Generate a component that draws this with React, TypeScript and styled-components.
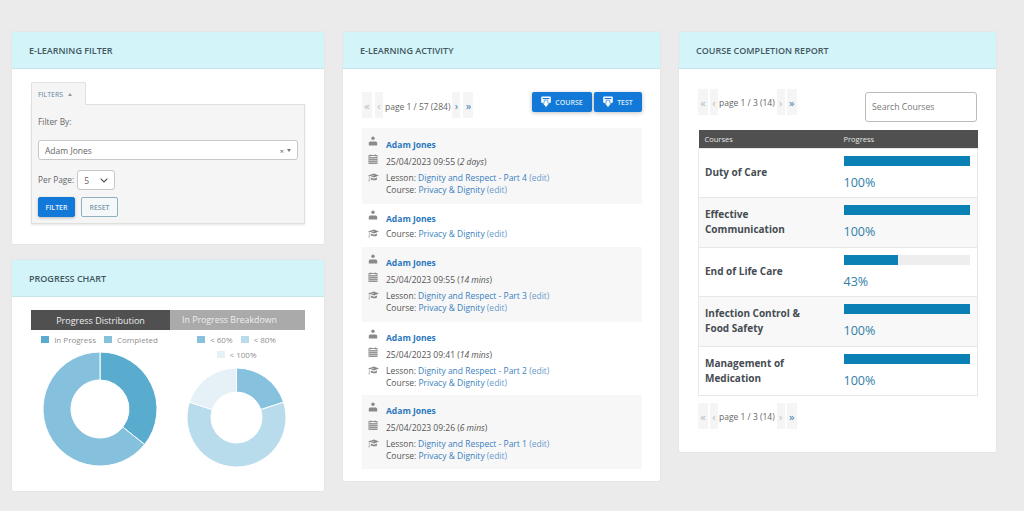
import React from "react";
import styled, { createGlobalStyle } from "styled-components";

const Global = createGlobalStyle`
  html, body { margin: 0; padding: 0; background: #ebebeb; }
  body { font-family: "Open Sans", "Noto Sans", sans-serif; color: #555; overflow: hidden; }
  * { box-sizing: border-box; }
`;

const Page = styled.div`
  width: 1024px;
  height: 511px;
  padding: 32px 28px 0 12px;
  display: grid;
  grid-template-columns: 312px 317px 317px;
  column-gap: 19px;
  align-items: start;
`;
const Column = styled.div`
  display: flex;
  flex-direction: column;
  gap: 16px;
`;
const Card = styled.section<{ $h: number }>`
  background: #fff;
  height: ${(p) => p.$h}px;
  border-radius: 2px;
  box-shadow: 0 0 0 1px #e6e6e6;
`;
const CardHead = styled.h2`
  margin: 0;
  height: 37px;
  padding: 0 17px;
  display: flex;
  align-items: center;
  background: #d3f5fa;
  border-bottom: 1px solid #c4e3ea;
  font-size: 9px;
  font-weight: 600;
  color: #44565f;
`;
const FilterBody = styled.div`
  padding: 13px 19px 0;
`;
const Tab = styled.div`
  width: 55px;
  height: 23px;
  margin-bottom: -1px;
  position: relative;
  z-index: 1;
  display: flex;
  align-items: center;
  gap: 5px;
  padding-left: 6px;
  background: #f5f5f5;
  border: 1px solid #e0e0e0;
  border-bottom: none;
  border-radius: 2px 2px 0 0;
  font-size: 7px;
  color: #5f86a0;
`;
const Caret = styled.span<{ $up?: boolean }>`
  width: 0;
  height: 0;
  border-left: 2.5px solid transparent;
  border-right: 2.5px solid transparent;
  ${(p) => (p.$up ? "border-bottom: 3px solid #999;" : "border-top: 3px solid #777;")}
`;
const FilterPanel = styled.div`
  height: 120px;
  padding: 10px 6px 0;
  background: #f5f5f5;
  border: 1px solid #e0e0e0;
  box-shadow: 0 1px 2px rgba(0, 0, 0, 0.1);
`;
const FieldLabel = styled.div`
  font-size: 8.3px;
  line-height: 14px;
  color: #666;
`;
const Combo = styled.div`
  margin-top: 11px;
  height: 20px;
  display: flex;
  align-items: center;
  justify-content: space-between;
  padding: 0 6px;
  background: #fff;
  border: 1px solid #c8c8c8;
  border-radius: 3px;
  font-size: 8.5px;
  color: #666;
`;
const ComboControls = styled.span`
  display: flex;
  align-items: center;
  gap: 3px;
  font-size: 8px;
`;
const PerPageRow = styled.div`
  margin-top: 10px;
  display: flex;
  align-items: center;
  gap: 3px;
`;
const PerPage = styled.div`
  width: 38px;
  height: 20px;
  display: flex;
  align-items: center;
  justify-content: space-between;
  padding: 0 6px;
  background: #fff;
  border: 1px solid #c8c8c8;
  border-radius: 3px;
  font-size: 8.5px;
  color: #666;
`;
const ButtonRow = styled.div`
  margin-top: 7px;
  display: flex;
  gap: 6px;
`;
const Btn = styled.button<{ $ghost?: boolean }>`
  width: 37px;
  height: 20px;
  padding: 0;
  font-family: inherit;
  font-size: 7px;
  font-weight: 600;
  border-radius: 2px;
  color: ${(p) => (p.$ghost ? "#7a9aaa" : "#e8f2fb")};
  background: ${(p) => (p.$ghost ? "#f5f8f9" : "#1279d8")};
  border: 1px solid ${(p) => (p.$ghost ? "#8fb0bf" : "#1279d8")};
  box-shadow: ${(p) => (p.$ghost ? "none" : "0 1px 3px rgba(0,0,0,.25)")};
`;
const ChartBody = styled.div`
  padding: 13px 19px 0;
`;
const Steps = styled.div`
  height: 20px;
  display: grid;
  grid-template-columns: 139px 135px;
  background: #aaa;
`;
const Step = styled.div<{ $dark?: boolean }>`
  position: relative;
  display: flex;
  align-items: center;
  justify-content: center;
  font-size: ${(p) => (p.$dark ? "9px" : "8.8px")};
  color: #eee;
  padding-right: ${(p) => (p.$dark ? "0" : "16px")};
  background: ${(p) => (p.$dark ? "#505050" : "#aaa")};
`;
const Arrow = styled.span`
  position: absolute;
  right: -9px;
  top: 0;
  width: 0;
  height: 0;
  border-top: 10px solid transparent;
  border-bottom: 10px solid transparent;
  border-left: 9px solid #505050;
`;
const Charts = styled.div`
  display: grid;
  grid-template-columns: 137px 137px;
`;
const ChartCol = styled.div`
  display: flex;
  flex-direction: column;
  align-items: center;
`;
const Legend = styled.div<{ $w: number }>`
  width: ${(p) => p.$w}px;
  display: flex;
  flex-wrap: wrap;
  justify-content: center;
  column-gap: 8px;
  padding-top: 2.5px;
`;
const LegendItem = styled.span`
  display: inline-flex;
  align-items: center;
  gap: 5px;
  height: 14.5px;
  font-size: 8px;
  color: #8f8f8f;
`;
const Swatch = styled.i<{ $c: string }>`
  display: block;
  width: 8px;
  height: 7px;
  background: ${(p) => p.$c};
`;
const DonutSvg = styled.svg<{ $mt: number }>`
  display: block;
  margin-top: ${(p) => p.$mt}px;
`;
const ActivityBody = styled.div`
  padding: 23px 18px 0 19px;
`;
const ActivityTop = styled.div`
  height: 36px;
  display: flex;
  align-items: flex-start;
  justify-content: space-between;
`;
const Pager = styled.div<{ $mt?: number }>`
  display: flex;
  align-items: center;
  height: 26px;
  margin-top: ${(p) => p.$mt ?? 0}px;
  font-size: 8.5px;
  color: #666;
`;
const PageBtn = styled.span<{ $w?: number; $off?: boolean; $gap?: number }>`
  height: 26px;
  width: ${(p) => p.$w ?? 10}px;
  margin-right: ${(p) => p.$gap ?? 3}px;
  display: flex;
  align-items: center;
  justify-content: center;
  background: #f5f5f5;
  color: ${(p) => (p.$off ? "#bbb" : "#3b7fb5")};
  font-size: 11px;
`;
const PageText = styled.span<{ $drop?: number }>`
  margin-right: 2px;
  padding-top: ${(p) => p.$drop ?? 0}px;
  white-space: nowrap;
`;
const ActionRow = styled.div`
  display: flex;
  gap: 2px;
`;
const ActionBtn = styled.button<{ $w: number }>`
  width: ${(p) => p.$w}px;
  height: 20px;
  padding: 0;
  display: flex;
  align-items: center;
  justify-content: center;
  gap: 4px;
  border: none;
  border-radius: 2px;
  background: #1279d8;
  color: #dcebf8;
  font-family: inherit;
  font-size: 7px;
  font-weight: 600;
  box-shadow: 0 1px 4px rgba(0, 0, 0, 0.25);
`;
const Entry = styled.div<{ $h: number; $alt?: boolean; $pt: number }>`
  height: ${(p) => p.$h}px;
  padding: ${(p) => p.$pt}px 8px 0 6px;
  background: ${(p) => (p.$alt ? "#f7f7f7" : "#fff")};
`;
const EntryLine = styled.div<{ $h: number }>`
  display: grid;
  grid-template-columns: 18px 1fr;
  align-items: start;
  min-height: ${(p) => p.$h}px;
  font-size: 8.5px;
  line-height: 12.4px;
  color: #555;
`;
const IconWrap = styled.span<{ $lift?: number }>`
  display: block;
  color: #8a8a8a;
  height: 11px;
  margin-top: ${(p) => -(p.$lift ?? 0)}px;
`;
const Name = styled.a`
  color: #2a78be;
  font-weight: 700;
  line-height: 15px;
`;
const Link = styled.a`
  color: #3a7fc0;
`;
const Edit = styled.a`
  color: #6a9bcb;
`;
const ReportBody = styled.div`
  padding: 20px 19px 0;
`;
const ReportTop = styled.div`
  height: 41px;
  display: flex;
  justify-content: space-between;
  align-items: flex-start;
`;
const Search = styled.div`
  width: 112px;
  height: 30px;
  margin-top: 3px;
  padding-left: 6px;
  display: flex;
  align-items: center;
  border: 1px solid #bbb;
  border-radius: 3px;
  font-size: 8.7px;
  color: #777;
`;
const Table = styled.table`
  width: 279px;
  border-collapse: collapse;
  table-layout: fixed;
`;
const Th = styled.th`
  height: 18px;
  padding: 0 6px;
  background: #505050;
  color: #e6e6e6;
  font-size: 7.5px;
  font-weight: 400;
  text-align: left;
`;
const Tr = styled.tr<{ $alt?: boolean }>`
  background: ${(p) => (p.$alt ? "#f8f8f8" : "#fff")};
`;
const TdName = styled.td`
  height: 49.5px;
  padding: 0 28px 0 6px;
  border: 1px solid #e8e8e8;
  border-right: none;
  font-size: 10px;
  line-height: 14.8px;
  font-weight: 700;
  color: #454c52;
`;
const TdProgress = styled.td`
  padding: 7px 7px 0 6px;
  vertical-align: top;
  border: 1px solid #e8e8e8;
  border-left: none;
`;
const Track = styled.div`
  height: 10px;
  background: #eee;
`;
const Fill = styled.div`
  height: 100%;
  background: #0a80b5;
`;
const Pct = styled.div`
  margin-top: 8px;
  font-size: 12.5px;
  line-height: 17px;
  color: #2f7ea6;
`;

const polar = (c: number, r: number, deg: number) => {
  const a = ((deg - 90) * Math.PI) / 180;
  return [c + r * Math.cos(a), c + r * Math.sin(a)];
};
const arc = (c: number, R: number, r: number, s: number, e: number) => {
  const big = e - s > 180 ? 1 : 0;
  const [x1, y1] = polar(c, R, s);
  const [x2, y2] = polar(c, R, e);
  const [x3, y3] = polar(c, r, e);
  const [x4, y4] = polar(c, r, s);
  return `M${x1} ${y1}A${R} ${R} 0 ${big} 1 ${x2} ${y2}L${x3} ${y3}A${r} ${r} 0 ${big} 0 ${x4} ${y4}Z`;
};
const Donut = ({ R, r, mt, parts }: { R: number; r: number; mt: number; parts: [number, string][] }) => {
  let at = 0;
  return (
    <DonutSvg $mt={mt} width={R * 2} height={R * 2} viewBox={`0 0 ${R * 2} ${R * 2}`}>
      {parts.map(([deg, c]) => {
        const d = arc(R, R, r, at, at + deg);
        at += deg;
        return <path key={c} d={d} fill={c} stroke="#fff" strokeWidth={1} />;
      })}
    </DonutSvg>
  );
};

const UserIcon = () => (
  <svg width="10" height="10" viewBox="0 0 10 10" fill="currentColor">
    <circle cx="5" cy="2.2" r="1.7" />
    <path d="M.8 9.4V7c0-1 .9-1.5 1.9-1.5h4.6c1 0 1.9.5 1.9 1.5v2.4z" />
  </svg>
);
const CalIcon = () => (
  <svg width="10" height="10" viewBox="0 0 10 10" fill="none" stroke="currentColor" strokeWidth="0.9">
    <rect x="1" y="1.5" width="8" height="8" />
    <path d="M1 3.6h8M2.8 .4v2M7.2 .4v2M3 3.6v5.9M5 3.6v5.9M7 3.6v5.9M1 5.6h8M1 7.6h8" />
  </svg>
);
const CapIcon = () => (
  <svg width="11" height="11" viewBox="0 0 11 11" fill="currentColor">
    <path d="M0 3.4 6 1.4l5 2L6 5.6 2.8 4.3 6 3.7l-.1-.4-4.1.9zM.9 4.2h.5v3.6l.4 1.4H.5l.4-1.4zM2.8 5.4 6 6.8l3-1.3v1.9C8 8.4 4.6 8.6 2.8 7.6z" />
  </svg>
);
const DownloadIcon = () => (
  <svg width="10" height="12" viewBox="0 0 10 12">
    <rect x="0.2" y="0.6" width="9.6" height="6.4" rx="1" fill="#fff" />
    <rect x="1.6" y="2" width="6.8" height="1.1" fill="#1279d8" />
    <path d="M3.2 4.2h3.6v2.9h1.7L5 11.4 1.5 7.1h1.7z" fill="#fff" stroke="#1279d8" strokeWidth="0.6" />
  </svg>
);

const ReportPager = ({ mt }: { mt?: number }) => (
  <Pager $mt={mt}>
    <PageBtn $off $gap={2}>«</PageBtn>
    <PageBtn $off $w={8} $gap={1}>‹</PageBtn>
    <PageText>page 1 / 3 (14)</PageText>
    <PageBtn $w={8} $off $gap={2}>›</PageBtn>
    <PageBtn>»</PageBtn>
  </Pager>
);

type E = { h: number; pt: number; alt?: boolean; date?: React.ReactNode; lesson?: string };
const entries: E[] = [
  { h: 76, pt: 9, alt: true, date: <>25/04/2023 09:55 (<em>2 days</em>)</>, lesson: "Dignity and Respect - Part 4" },
  { h: 43, pt: 7 },
  { h: 75, pt: 8, alt: true, date: <>25/04/2023 09:55 (<em>14 mins</em>)</>, lesson: "Dignity and Respect - Part 3" },
  { h: 73, pt: 8, date: <>25/04/2023 09:41 (<em>14 mins</em>)</>, lesson: "Dignity and Respect - Part 2" },
  { h: 74, pt: 8, alt: true, date: <>25/04/2023 09:26 (<em>6 mins</em>)</>, lesson: "Dignity and Respect - Part 1" },
];
const rows: [string, number][] = [
  ["Duty of Care", 100],
  ["Effective Communication", 100],
  ["End of Life Care", 43],
  ["Infection Control & Food Safety", 100],
  ["Management of Medication", 100],
];

export default function App() {
  return (
    <Page>
      <Global />
      <Column>
        <Card $h={212}>
          <CardHead>E-LEARNING FILTER</CardHead>
          <FilterBody>
            <Tab>FILTERS <Caret $up /></Tab>
            <FilterPanel>
              <FieldLabel>Filter By:</FieldLabel>
              <Combo>
                <span>Adam Jones</span>
                <ComboControls>× <Caret /></ComboControls>
              </Combo>
              <PerPageRow>
                <FieldLabel>Per Page:</FieldLabel>
                <PerPage>
                  <span>5</span>
                  <svg width="8" height="5" viewBox="0 0 8 5" fill="none" stroke="#555" strokeWidth="1.2"><path d="M.7.7 4 4 7.3.7" /></svg>
                </PerPage>
              </PerPageRow>
              <ButtonRow>
                <Btn>FILTER</Btn>
                <Btn $ghost>RESET</Btn>
              </ButtonRow>
            </FilterPanel>
          </FilterBody>
        </Card>
        <Card $h={231}>
          <CardHead>PROGRESS CHART</CardHead>
          <ChartBody>
            <Steps>
              <Step $dark>Progress Distribution<Arrow /></Step>
              <Step>In Progress Breakdown</Step>
            </Steps>
            <Charts>
              <ChartCol>
                <Legend $w={137}>
                  <LegendItem><Swatch $c="#5aaccf" />In Progress</LegendItem>
                  <LegendItem><Swatch $c="#85c1dd" />Completed</LegendItem>
                </Legend>
                <Donut R={57} r={29} mt={5} parts={[[128.5, "#5aaccf"], [231.5, "#85c1dd"]]} />
              </ChartCol>
              <ChartCol>
                <Legend $w={100}>
                  <LegendItem><Swatch $c="#86c2dd" />&lt; 60%</LegendItem>
                  <LegendItem><Swatch $c="#b9dcec" />&lt; 80%</LegendItem>
                  <LegendItem><Swatch $c="#e5f1f7" />&lt; 100%</LegendItem>
                </Legend>
                <Donut R={49.5} r={25.5} mt={6} parts={[[72, "#86c2dd"], [216, "#b9dcec"], [72, "#e5f1f7"]]} />
              </ChartCol>
            </Charts>
          </ChartBody>
        </Card>
      </Column>
      <Card $h={449}>
        <CardHead>E-LEARNING ACTIVITY</CardHead>
        <ActivityBody>
          <ActivityTop>
            <Pager>
              <PageBtn $off>«</PageBtn>
              <PageBtn $off $w={8} $gap={2}>‹</PageBtn>
              <PageText $drop={3}>page 1 / 57 (284)</PageText>
              <PageBtn $w={8}>›</PageBtn>
              <PageBtn>»</PageBtn>
            </Pager>
            <ActionRow>
              <ActionBtn $w={60}><DownloadIcon />COURSE</ActionBtn>
              <ActionBtn $w={48}><DownloadIcon />TEST</ActionBtn>
            </ActionRow>
          </ActivityTop>
          {entries.map((e, i) => (
            <Entry key={i} $h={e.h} $pt={e.pt} $alt={e.alt}>
              <EntryLine $h={e.date ? 18.5 : 17}>
                <IconWrap $lift={1}><UserIcon /></IconWrap>
                <Name>Adam Jones</Name>
              </EntryLine>
              {e.date && (
                <EntryLine $h={16}>
                  <IconWrap $lift={2}><CalIcon /></IconWrap>
                  <span>{e.date}</span>
                </EntryLine>
              )}
              <EntryLine $h={24}>
                <IconWrap><CapIcon /></IconWrap>
                <span>
                  {e.lesson && <>Lesson: <Link>{e.lesson}</Link> <Edit>(edit)</Edit><br /></>}
                  Course: <Link>Privacy &amp; Dignity</Link> <Edit>(edit)</Edit>
                </span>
              </EntryLine>
            </Entry>
          ))}
        </ActivityBody>
      </Card>
      <Card $h={420}>
        <CardHead>COURSE COMPLETION REPORT</CardHead>
        <ReportBody>
          <ReportTop>
            <ReportPager />
            <Search>Search Courses</Search>
          </ReportTop>
          <Table>
            <colgroup><col width="139" /><col width="140" /></colgroup>
            <thead>
              <tr><Th>Courses</Th><Th>Progress</Th></tr>
            </thead>
            <tbody>
              {rows.map(([n, p], i) => (
                <Tr key={n} $alt={i % 2 === 1}>
                  <TdName>{n}</TdName>
                  <TdProgress>
                    <Track><Fill style={{ width: `${p}%` }} /></Track>
                    <Pct>{p}%</Pct>
                  </TdProgress>
                </Tr>
              ))}
            </tbody>
          </Table>
          <ReportPager mt={7} />
        </ReportBody>
      </Card>
    </Page>
  );
}
